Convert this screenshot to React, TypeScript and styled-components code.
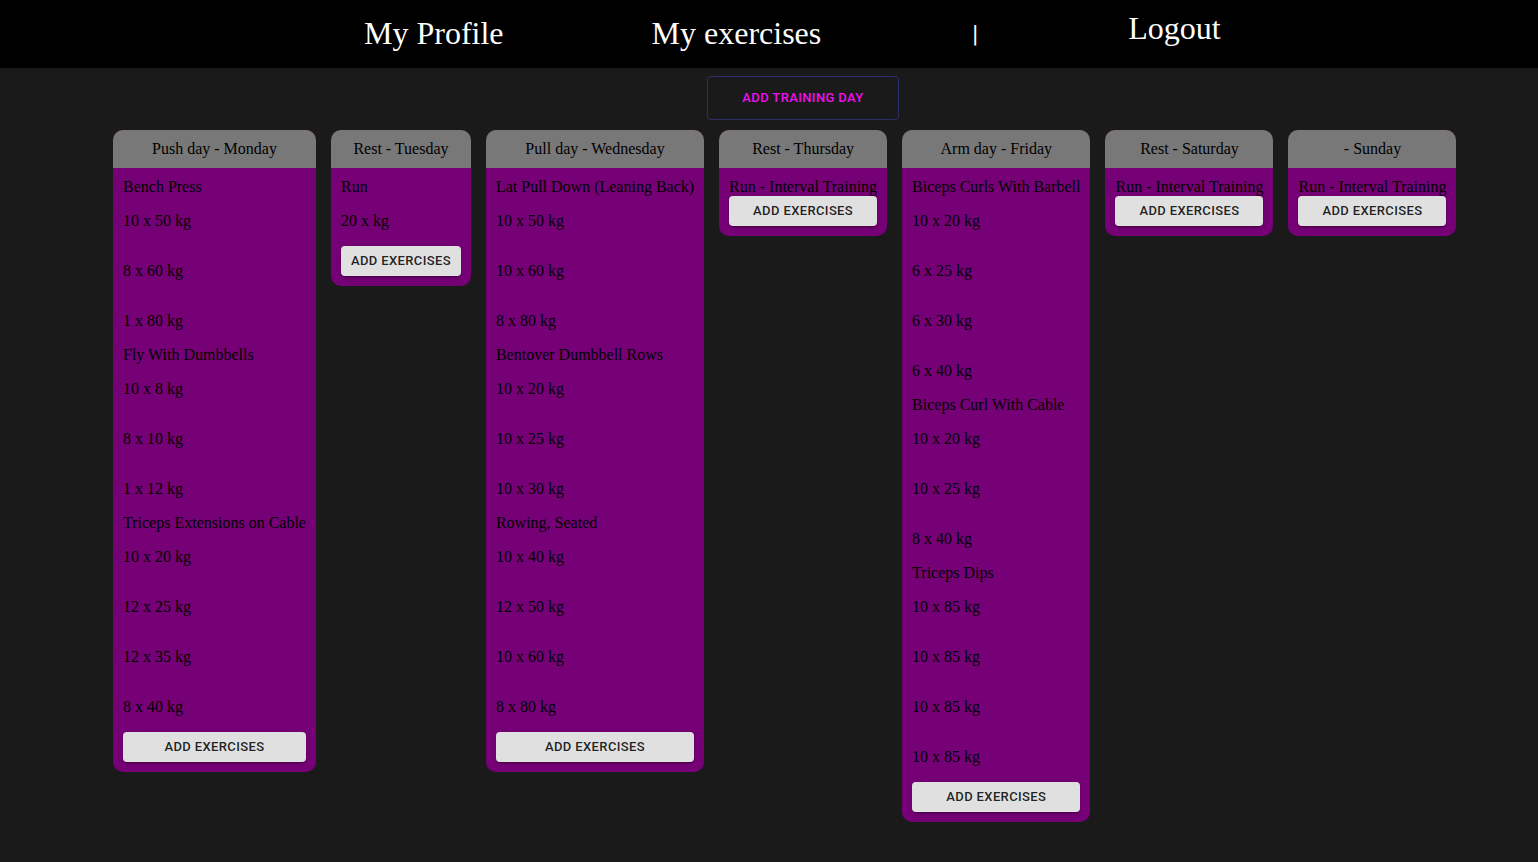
import React from "react";
import styled, { createGlobalStyle } from "styled-components";

const GlobalStyle = createGlobalStyle`
  html, body {
    margin: 0;
    padding: 0;
    background: #1a1a1a;
  }
  body {
    font-family: "Liberation Serif", "Times New Roman", serif;
    min-height: 862px;
  }
`;

const Page = styled.div`
  min-height: 862px;
  background: #1a1a1a;
`;

const Header = styled.header`
  height: 68px;
  background: #000;
  display: flex;
  align-items: flex-start;
  padding-left: 364px;
  gap: 148px;
  box-sizing: border-box;
`;

const NavItem = styled.a<{ $top: number }>`
  margin-top: ${(p) => p.$top}px;
  color: #fff;
  font-family: "Liberation Serif", "Times New Roman", serif;
  font-size: 32px;
  line-height: 1.107;
  text-decoration: none;
  cursor: pointer;
  white-space: nowrap;
`;

const Divider = styled.span`
  margin-top: 20px;
  margin-left: 3px;
  margin-right: 2px;
  color: #fff;
  font-family: Roboto, "Liberation Sans", sans-serif;
  font-size: 24px;
  line-height: 28px;
`;

const Toolbar = styled.div`
  display: flex;
  justify-content: flex-start;
  padding-left: 707px;
  padding-top: 8px;
`;

const OutlinedButton = styled.button`
  box-sizing: border-box;
  width: 192px;
  height: 44px;
  background: transparent;
  border: 1px solid #2c2f6a;
  border-radius: 4px;
  color: #ee10ee;
  font-family: Roboto, "Liberation Sans", sans-serif;
  font-weight: 500;
  font-size: 13px;
  letter-spacing: 0.37px;
  text-transform: uppercase;
  cursor: pointer;
  padding: 0 0 2px;
`;

const Board = styled.div`
  display: flex;
  align-items: flex-start;
  gap: 15px;
  padding-left: 113px;
  padding-top: 10px;
`;

const Card = styled.section`
  border-radius: 10px;
  overflow: hidden;
  background: #760076;
  flex: 0 0 auto;
`;

const CardHeader = styled.div`
  background: #787878;
  color: #000;
  text-align: center;
  font-size: 16px;
  line-height: 18px;
  padding: 10px 10px;
  white-space: nowrap;
`;

const CardBody = styled.div`
  display: flex;
  flex-direction: column;
  padding: 10px;
`;

const ExerciseName = styled.div`
  color: #000;
  font-size: 16px;
  line-height: 18px;
  white-space: nowrap;
`;

const SetLine = styled.p`
  margin: 16px 0;
  color: #000;
  font-size: 16px;
  line-height: 18px;
  white-space: nowrap;
`;

const AddButton = styled.button`
  box-sizing: border-box;
  height: 30px;
  padding: 0 10px 2px;
  border: none;
  border-radius: 4px;
  background: #e0e0e0;
  color: rgba(0, 0, 0, 0.87);
  font-family: Roboto, "Liberation Sans", sans-serif;
  font-weight: 500;
  font-size: 13px;
  letter-spacing: 0.37px;
  text-transform: uppercase;
  white-space: nowrap;
  cursor: pointer;
  box-shadow: 0px 3px 1px -2px rgba(0, 0, 0, 0.2),
    0px 2px 2px 0px rgba(0, 0, 0, 0.14), 0px 1px 5px 0px rgba(0, 0, 0, 0.12);
`;

type Exercise = { name: string; sets: string[] };
type Day = { title: string; exercises: Exercise[] };

const days: Day[] = [
  {
    title: "Push day - Monday",
    exercises: [
      { name: "Bench Press", sets: ["10 x 50 kg", "8 x 60 kg", "1 x 80 kg"] },
      { name: "Fly With Dumbbells", sets: ["10 x 8 kg", "8 x 10 kg", "1 x 12 kg"] },
      {
        name: "Triceps Extensions on Cable",
        sets: ["10 x 20 kg", "12 x 25 kg", "12 x 35 kg", "8 x 40 kg"],
      },
    ],
  },
  {
    title: "Rest - Tuesday",
    exercises: [{ name: "Run", sets: ["20 x kg"] }],
  },
  {
    title: "Pull day - Wednesday",
    exercises: [
      {
        name: "Lat Pull Down (Leaning Back)",
        sets: ["10 x 50 kg", "10 x 60 kg", "8 x 80 kg"],
      },
      {
        name: "Bentover Dumbbell Rows",
        sets: ["10 x 20 kg", "10 x 25 kg", "10 x 30 kg"],
      },
      {
        name: "Rowing, Seated",
        sets: ["10 x 40 kg", "12 x 50 kg", "10 x 60 kg", "8 x 80 kg"],
      },
    ],
  },
  {
    title: "Rest - Thursday",
    exercises: [{ name: "Run - Interval Training", sets: [] }],
  },
  {
    title: "Arm day - Friday",
    exercises: [
      {
        name: "Biceps Curls With Barbell",
        sets: ["10 x 20 kg", "6 x 25 kg", "6 x 30 kg", "6 x 40 kg"],
      },
      {
        name: "Biceps Curl With Cable",
        sets: ["10 x 20 kg", "10 x 25 kg", "8 x 40 kg"],
      },
      {
        name: "Triceps Dips",
        sets: ["10 x 85 kg", "10 x 85 kg", "10 x 85 kg", "10 x 85 kg"],
      },
    ],
  },
  {
    title: "Rest - Saturday",
    exercises: [{ name: "Run - Interval Training", sets: [] }],
  },
  {
    title: " - Sunday",
    exercises: [{ name: "Run - Interval Training", sets: [] }],
  },
];

export default function App() {
  return (
    <Page>
      <GlobalStyle />
      <Header>
        <NavItem $top={16}>My Profile</NavItem>
        <NavItem $top={16}>My exercises</NavItem>
        <Divider>|</Divider>
        <NavItem $top={11}>Logout</NavItem>
      </Header>
      <Toolbar>
        <OutlinedButton>Add training day</OutlinedButton>
      </Toolbar>
      <Board>
        {days.map((day, i) => (
          <Card key={i}>
            <CardHeader>{day.title}</CardHeader>
            <CardBody>
              {day.exercises.map((ex, j) => (
                <React.Fragment key={j}>
                  <ExerciseName>{ex.name}</ExerciseName>
                  {ex.sets.map((s, k) => (
                    <SetLine key={k}>{s}</SetLine>
                  ))}
                </React.Fragment>
              ))}
              <AddButton>Add exercises</AddButton>
            </CardBody>
          </Card>
        ))}
      </Board>
    </Page>
  );
}
